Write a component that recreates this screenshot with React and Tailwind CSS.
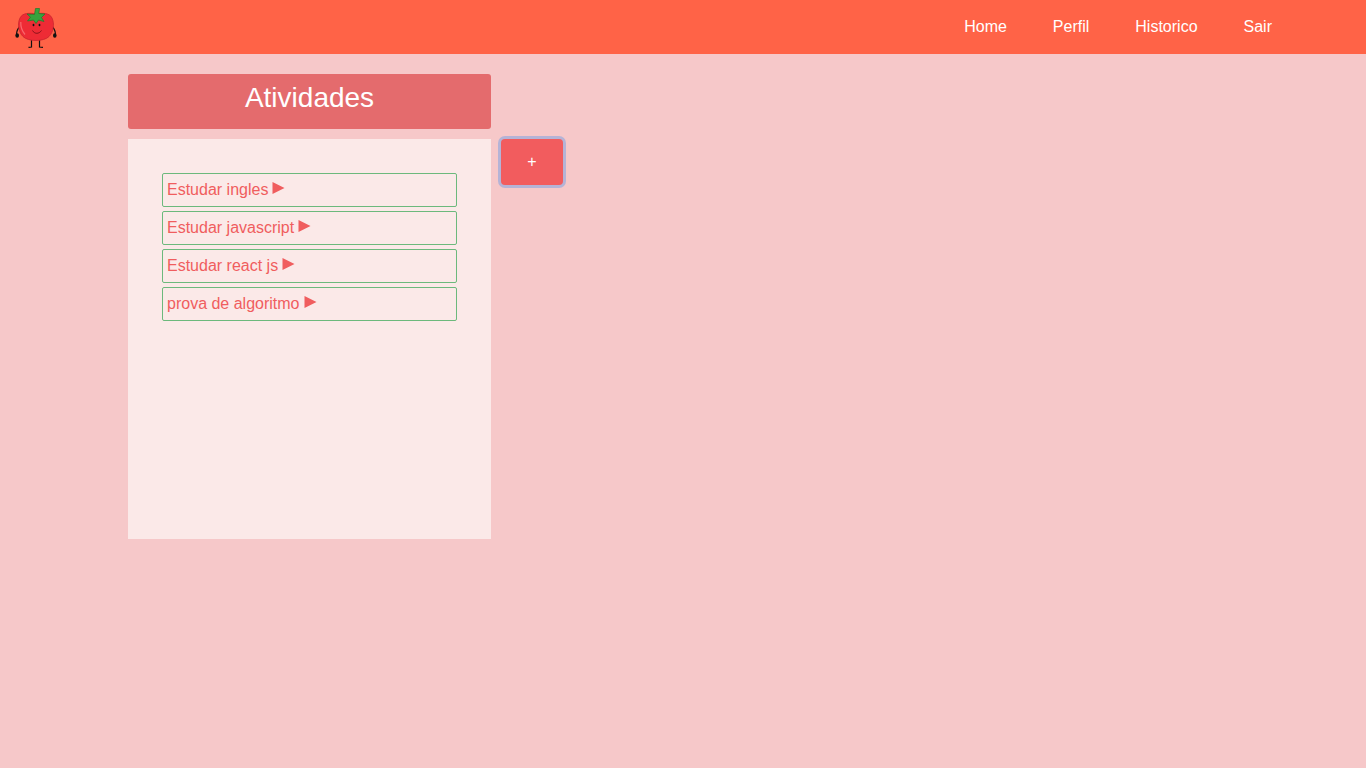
const Tomato = () => (
  <svg width="44" height="44" viewBox="14 5 44 44" className="block">
    <path d="M19.5 27 C17.5 29 16.5 32 16.5 35" fill="none" stroke="#111" strokeWidth="1.2" />
    <path d="M52.5 27 C54.5 29 55.5 32 55.5 35" fill="none" stroke="#111" strokeWidth="1.2" />
    <ellipse cx="17.2" cy="35.5" rx="1.8" ry="2.3" fill="#111" />
    <ellipse cx="54.8" cy="35.5" rx="1.8" ry="2.3" fill="#111" />
    <path d="M31.5 40 L31.5 47 L28.5 47.3 M39.5 40 L39.5 47 L43 47.3" stroke="#111" strokeWidth="1.2" fill="none" />
    <path d="M36 13.8 C42 13 49.5 12.5 52 18 C54.8 24 53.5 32 49 36.5 C44 41.8 28 41.8 23 36.5 C18.5 32 17.2 24 20 18 C22.5 12.5 30 13 36 13.8 Z" fill="#ee2b35" stroke="#c9252e" strokeWidth="0.8" />
    <path d="M20.8 22 C20.5 27 22 31 25 34.5" stroke="#f8666c" strokeWidth="1.2" fill="none" />
    <path d="M34.5 14.5 L35.5 8.5 L39.5 8.5 L38.8 13.5 L45 14 L41.5 17.5 L44 21.5 L38.5 20 L36 23.5 L33.5 20 L27.5 21 L30.5 17.2 L27 14 Z" fill="#37a33d" stroke="#1f7a29" strokeWidth="0.7" />
    <ellipse cx="33.5" cy="25" rx="0.9" ry="1.3" fill="#111" />
    <ellipse cx="39.5" cy="25" rx="0.9" ry="1.3" fill="#111" />
    <path d="M32.5 30.5 C34.5 34.2 39 34.2 41.5 30.5" fill="none" stroke="#6d0d13" strokeWidth="0.8" />
  </svg>
);

const items = ["Estudar ingles", "Estudar javascript", "Estudar react js", "prova de algoritmo"];
const links = ["Home", "Perfil", "Historico", "Sair"];

export default function App() {
  return (
    <div className="min-h-[768px] bg-[#f6c8c9] font-['Liberation_Sans',sans-serif]">
      <nav className="flex h-[54px] items-center bg-[#ff6347] pl-[14px] pr-[94px]">
        <Tomato />
        <ul className="ml-auto flex gap-[46px] text-base text-white">
          {links.map((l) => (
            <li key={l}>{l}</li>
          ))}
        </ul>
      </nav>
      <main className="ml-[128px] mt-5 flex flex-col gap-[10px]">
        <h1 className="h-[55px] w-[363px] rounded-[3px] bg-[#e46b6d] pt-[4px] text-center text-[28px] leading-[39px] text-white">
          Atividades
        </h1>
        <div className="flex items-start gap-[10px]">
          <ul className="flex h-[400px] w-[363px] flex-col gap-1 bg-[#fbe9e8] p-[34px]">
            {items.map((t) => (
              <li
                key={t}
                className="flex h-[34px] items-center gap-1 rounded-[2px] border border-[#6cb97c] px-1 text-base text-[#f05d5e]"
              >
                <span>{t}</span>
                <svg width="13" height="12" viewBox="0 0 13 12" className="mb-[4px]">
                  <path d="M0.5 0 L12.5 6 L0.5 12 Z" fill="#f05d5e" />
                </svg>
              </li>
            ))}
          </ul>
          <button className="flex h-[46px] w-[62px] items-center justify-center rounded-[4px] bg-[#f25c5e] text-base text-white shadow-[0_0_0_3px_#b5b3d6]">
            +
          </button>
        </div>
      </main>
    </div>
  );
}
